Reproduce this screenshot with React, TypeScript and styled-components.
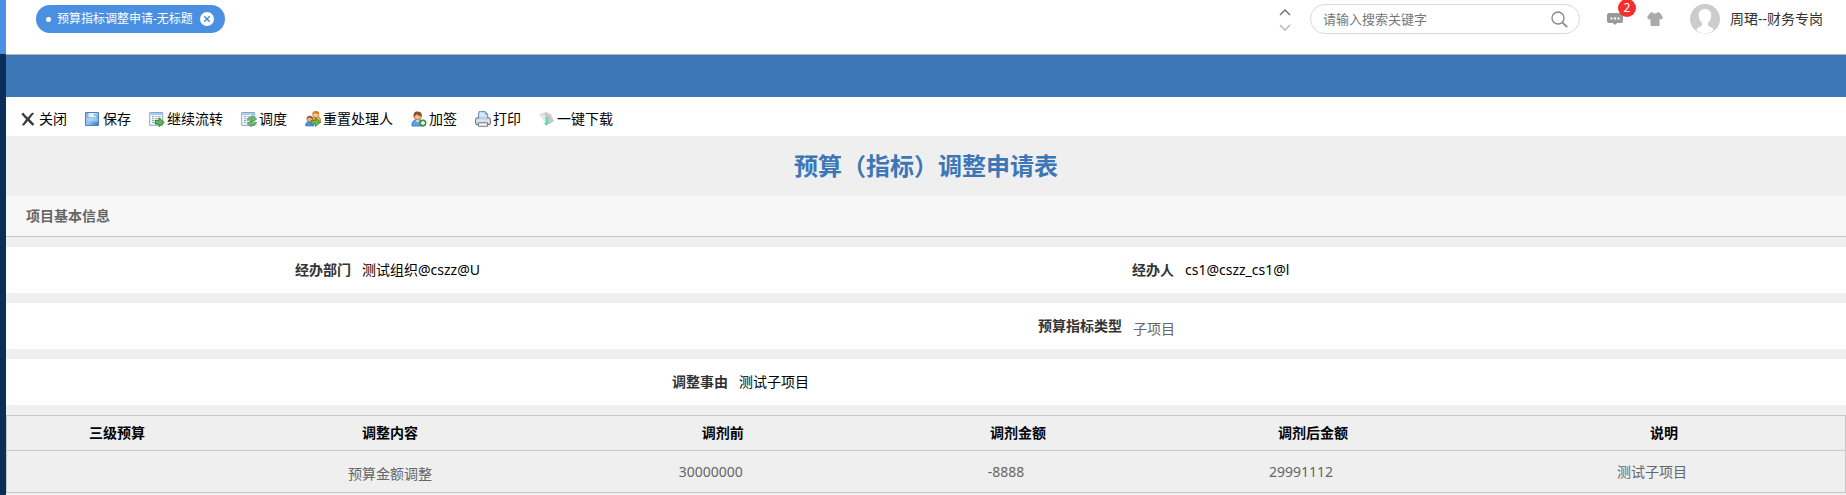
import React from "react";
import styled, { createGlobalStyle } from "styled-components";

const GlobalStyle = createGlobalStyle`
  *, *::before, *::after { box-sizing: border-box; }
  body {
    margin: 0;
    background: #efefef;
    color: #000;
    font-family: "Noto Sans", "Noto Sans CJK SC", sans-serif;
    font-size: 14px;
    line-height: 20px;
  }
  button {
    padding: 0;
    border: 0;
    background: none;
    color: inherit;
    font: inherit;
    cursor: pointer;
  }
`;

const Page = styled.div`
  display: flex;
  min-height: 100vh;
`;

const Rail = styled.aside`
  display: flex;
  flex-direction: column;
  flex: 0 0 6px;
  background: #0b2e59;
`;

const RailAccent = styled.div`
  height: 54px;
  background: #4a90e2;
`;

const Main = styled.main`
  flex: 1;
  min-width: 0;
`;

const Header = styled.header`
  display: flex;
  align-items: flex-start;
  justify-content: space-between;
  height: 55px;
  padding: 4px 23px 0 30px;
  border-bottom: 1px solid #b9b9b9;
  background: #fff;
`;

const Tab = styled.div`
  display: flex;
  align-items: center;
  height: 28px;
  margin-top: 1px;
  padding: 0 11px 0 10px;
  border-radius: 14px;
  background: #4a90e2;
  color: #fff;
`;

const TabDot = styled.span`
  width: 5px;
  height: 5px;
  margin-right: 6px;
  border-radius: 50%;
  background: #fff;
`;

const TabLink = styled.a`
  margin-right: 7px;
  color: inherit;
  font-size: 12px;
  text-decoration: none;
  white-space: nowrap;
`;

const IconButton = styled.button`
  display: flex;
  align-items: center;
  justify-content: center;
`;

const HeaderTools = styled.div`
  display: flex;
  align-items: center;
  height: 30px;
`;

const Scroller = styled.div`
  display: flex;
  flex-direction: column;
  gap: 8px;
  margin: 1px 19px 0 0;
`;

const SearchBox = styled.form`
  display: flex;
  align-items: center;
  width: 270px;
  height: 30px;
  margin-right: 27px;
  padding: 0 11px 0 12px;
  border: 1px solid #d9d9d9;
  border-radius: 15px;
`;

const SearchInput = styled.input`
  flex: 1;
  min-width: 0;
  padding: 0;
  border: 0;
  outline: 0;
  background: none;
  color: #333;
  font: inherit;
  font-size: 13px;
  &::placeholder { color: #777; opacity: 1; }
`;

const MessageButton = styled(IconButton)`
  position: relative;
  margin-right: 24px;
`;

const Badge = styled.span`
  position: absolute;
  top: -12px;
  right: -13px;
  width: 18px;
  height: 18px;
  border-radius: 50%;
  background: #f52d2d;
  color: #fff;
  font-size: 12px;
  line-height: 18px;
  text-align: center;
`;

const User = styled.a`
  display: flex;
  align-items: center;
  gap: 10px;
  margin-left: 27px;
  color: #333;
  text-decoration: none;
  white-space: nowrap;
`;

const Banner = styled.div`
  height: 42px;
  background: #3c76b6;
`;

const Toolbar = styled.nav`
  display: flex;
  gap: 18px;
  height: 39px;
  padding: 12px 15px 0;
  background: #fff;
`;

const ToolButton = styled.button`
  display: flex;
  align-items: center;
  gap: 2px;
  height: 20px;
  white-space: nowrap;
  svg { flex: none; }
`;

const Title = styled.h1`
  margin: 0;
  padding: 12px 0;
  color: #3c76b6;
  font-size: 24px;
  font-weight: 700;
  line-height: 36px;
  text-align: center;
`;

const SectionTitle = styled.h2`
  margin: 0 0 10px;
  padding: 10px 20px;
  border-bottom: 1px solid #c8c8c8;
  background: #f7f7f7;
  color: #666;
  font-size: 14px;
  font-weight: 700;
  line-height: 20px;
`;

const FieldRow = styled.dl<{ $columns: string }>`
  display: grid;
  grid-template-columns: ${(p) => p.$columns};
  margin: 0 0 10px;
  padding: 13px 0;
  background: #fff;
`;

const FieldLabel = styled.dt`
  padding-right: 11px;
  color: #333;
  font-weight: 700;
  text-align: right;
  white-space: nowrap;
`;

const FieldValue = styled.dd<{ $readOnly?: boolean }>`
  margin: 0;
  color: ${(p) => (p.$readOnly ? "#666" : "#000")};
  line-height: ${(p) => (p.$readOnly ? 26 : 20)}px;
  height: 20px;
  white-space: nowrap;
`;

const Table = styled.table`
  width: 100%;
  border: 1px solid #c8c8c8;
  border-collapse: collapse;
  table-layout: fixed;
`;

const Col = styled.col<{ $share: number }>`
  width: ${(p) => p.$share}%;
`;

const HeadCell = styled.th`
  height: 35px;
  padding: 0;
  border-bottom: 1px solid #c8c8c8;
  font-weight: 700;
`;

const Cell = styled.td<{ $entry?: boolean }>`
  height: 42px;
  padding: ${(p) => (p.$entry ? "0 24px 0 0" : "4px 0 0")};
  color: #666;
  text-align: center;
`;

const Svg = ({ children, size = 16 }: { children: React.ReactNode; size?: number }) => (
  <svg width={size} height={size} viewBox="0 0 16 16" fill="none" aria-hidden="true">
    {children}
  </svg>
);

const CloseIcon = () => (
  <Svg>
    <path d="M.4 3.2 2.2 1.500Q4.300 4.500 6.700 6.400L11 1.800 13.200 2 8.500 7.900 13.400 13.200 11.400 14.700 6.800 9.900 3 14.600.8 14.200 5.100 8.300Z" fill="#3a3a3a" />
  </Svg>
);

const SaveIcon = () => (
  <Svg>
    <defs>
      <linearGradient id="disk" x1="0" y1="0" x2="1" y2="1">
        <stop offset="0" stopColor="#78aee6" />
        <stop offset=".5" stopColor="#9cc6ef" />
        <stop offset="1" stopColor="#3372b9" />
      </linearGradient>
    </defs>
    <path d="M.5 1.500h13v13H.5z" fill="url(#disk)" stroke="#4f83bd" />
    <path d="M3.500 2h7.500v4h-7.500z" fill="#e6f1fc" />
    <path d="M9 2.500h1.500V5H9z" fill="#77a9dc" />
    <path d="M1 7h12v3.500Q7 11 1 9z" fill="#c4dff7" opacity=".45" />
  </Svg>
);

const Sheet = () => (
  <>
    <path d="M.7 1.5h13v12.8H.7z" fill="#f6f9fc" stroke="#83a8cf" />
    <path d="M1.2 2h12v2h-12z" fill="#adcbe9" />
    <path d="M3 5.5h2M3 7.5h2M3 9.5h2M3 11.5h2" stroke="#7ca6cf" />
    <path d="M6 5.5h6M6 7.5h6M6 9.5h4M6 11.5h3" stroke="#a9c6de" />
  </>
);

const ForwardIcon = () => (
  <Svg>
    <Sheet />
    <path d="M6.2 9.3h3.9V6.9l5.1 4.5-5.1 4.1v-2.4H6.2z" fill="#68b64d" stroke="#34802b" />
  </Svg>
);

const DispatchIcon = () => (
  <Svg>
    <Sheet />
    <path d="M6 9.200Q7.200 5.700 11 6.500V4.500l4.800 3.400-4.800 3.200V9.200Q8.300 8 6 9.200ZM15.600 11.400Q14.600 15 10.400 14.400v1.500L6 12.600l4.400-3v1.900q2.700 1.200 5.200-.1Z" fill="#6fbb63" stroke="#428d4b" strokeWidth=".7" />
  </Svg>
);

const ReassignIcon = () => (
  <Svg>
    <path d="M5.5 11Q6 5.5 11 5.5T15.5 10v2H6z" fill="#f3a846" stroke="#c37725" strokeWidth=".7" />
    <circle cx="10.8" cy="3.5" r="3.2" fill="#f5c38b" stroke="#b26a23" strokeWidth=".6" />
    <path d="M7.6 3Q7.3.2 10.8.2T14 3Q11 3.2 9.8 1.8 9.2 3 7.6 3Z" fill="#d17b22" />
    <path d="M.6 15Q.3 10.5 4.6 10.5T9 15z" fill="#4b96e0" stroke="#2e69b3" strokeWidth=".6" />
    <circle cx="4.8" cy="8" r="2.9" fill="#edb58b" stroke="#8c4a2b" strokeWidth=".6" />
    <path d="M1.8 7.5Q1.8 5 4.8 5T7.8 7.5Q5 7.5 4 6.5 3.5 7.5 1.8 7.5Z" fill="#9b552f" />
    <path d="M6 9.4h4.4V6.8l5.1 4.4-5.1 4.2v-2.5H6z" fill="#6fb653" stroke="#39842d" strokeWidth=".8" />
  </Svg>
);

const CosignIcon = () => (
  <Svg>
    <path d="M.9 15Q.4 8.8 6.5 8.8T12.5 15z" fill="#5ea5e7" stroke="#2e6caf" strokeWidth=".8" />
    <path d="m4.7 9 1.9 2.4L8.5 9z" fill="#f8faff" />
    <circle cx="6.7" cy="5.3" r="3.7" fill="#efbd91" stroke="#8d5737" strokeWidth=".7" />
    <path d="M2.7 5.7Q2-.1 6.9.6T10.5 5.5Q7.6 5.1 5.8 3.3 4.8 5 2.7 5.7Z" fill="#8c522f" />
    <circle cx="11.9" cy="12" r="3.3" fill="#4da34b" stroke="#2b7932" strokeWidth=".6" />
    <path d="M11.9 10v4M9.9 12h4" stroke="#fff" strokeWidth="1.3" />
  </Svg>
);

const PrintIcon = () => (
  <Svg>
    <path d="M3.3 7 4 .7h6.4L12.7 3v4z" fill="#d8eaff" stroke="#5d83b8" />
    <path d="M10.3.8v2.500h2.300" stroke="#7f9dc6" />
    <path d="M.6 8.300Q.7 6.700 2.500 6.700h11q1.800 0 1.900 1.600v4.200q0 1.200-1.300 1.200H2q-1.400 0-1.400-1.200z" fill="#c5c9d2" stroke="#686c78" />
    <path d="M3.900 5.500h8.300v2.500H3.900z" fill="#b4d2f4" />
    <path d="M1.300 9.200h13.400M1.200 11h13.600" stroke="#f0f1f4" />
    <path d="M3.500 11.800h9v3.500h-9z" fill="#f4f5f7" stroke="#747985" />
  </Svg>
);

const DownloadIcon = () => (
  <Svg>
    <path d="M.4 3.3 6.5 1 9 3.2 3.5 7.8Z" fill="#d8d9d9" />
    <path d="M6.8 1 12 3.1 15 10 10.3 13.2 4 8Z" fill="#c7c9c9" />
    <path d="m2 5.1 3.5-1.5 3 8.6L5 10Z" fill="#e7e8e8" />
    <path d="M6.5 6h2.4v5l1.6-.8-2.7 4.9L4 11.5l2.5.4z" fill="#56e0a4" />
    <path d="m9 3 3.2 1.6 1.3 4" stroke="#e1e3e3" />
  </Svg>
);

const CircleCloseIcon = () => (
  <Svg size={14}>
    <circle cx="8" cy="8" r="8" fill="#fff" />
    <path d="m4.8 4.8 6.4 6.4m0-6.4-6.4 6.4" stroke="#4a90e2" strokeWidth="1.8" />
  </Svg>
);

const Chevron = ({ down = false }: { down?: boolean }) => (
  <svg width="12" height="7" viewBox="0 0 12 7" fill="none" aria-hidden="true">
    <path d={down ? "M1 1l5 5 5-5" : "M1 6l5-5 5 5"} stroke={down ? "#bbb" : "#777"} strokeWidth="1.5" />
  </svg>
);

const SearchIcon = () => (
  <svg width="17" height="17" viewBox="0 0 17 17" fill="none" stroke="#888" strokeWidth="1.3" aria-hidden="true">
    <circle cx="7" cy="7" r="6" />
    <path d="m11.3 11.3 4.9 4.9" strokeWidth="1.7" />
  </svg>
);

const MessageIcon = () => (
  <Svg>
    <path d="M2 2h12q2 0 2 2v6q0 2-2 2h-4l-2 2-2-2H2q-2 0-2-2V4q0-2 2-2z" fill="#999" />
    <path d="M3.5 6.5h2v2h-2zM7 6.5h2v2H7zM10.5 6.5h2v2h-2z" fill="#fff" />
  </Svg>
);

const ShirtIcon = () => (
  <Svg>
    <path d="M5 1Q8 4.2 11 1l2.3 1.2L16 6.5l-2 2.3-1.5-1V15h-9V7.8L2 8.8 0 6.5 2.7 2.2Z" fill="#aaa" />
  </Svg>
);

const Avatar = () => (
  <svg width="30" height="30" viewBox="0 0 30 30" aria-hidden="true">
    <circle cx="15" cy="15" r="15" fill="#ccc" />
    <path d="M15 5c-4.4 0-6.6 3-6.2 7 .2 3.6 1.7 5.500 3.400 6.900.4 2.300-.8 3.300-3.900 4.600-1.200.5-1.700 1.600-1.800 2.900C9 28.500 11.700 29.500 15 29.500s6-1 8.500-3.100c-.1-1.300-.6-2.400-1.800-2.900-3.100-1.300-4.300-2.300-3.900-4.600 1.700-1.400 3.200-3.300 3.400-6.900.4-4-1.800-7-6.200-7z" fill="#fff" />
  </svg>
);

const tools = [
  { label: "关闭", Icon: CloseIcon },
  { label: "保存", Icon: SaveIcon },
  { label: "继续流转", Icon: ForwardIcon },
  { label: "调度", Icon: DispatchIcon },
  { label: "重置处理人", Icon: ReassignIcon },
  { label: "加签", Icon: CosignIcon },
  { label: "打印", Icon: PrintIcon },
  { label: "一键下载", Icon: DownloadIcon },
];

const columns = [
  { name: "三级预算", share: 12 },
  { name: "调整内容", share: 17.7 },
  { name: "调剂前", share: 18.5 },
  { name: "调剂金额", share: 13.6 },
  { name: "调剂后金额", share: 18.5 },
  { name: "说明", share: 19.7 },
];

const rows = [["", "预算金额调整", "30000000", "-8888", "29991112", "测试子项目"]];

export default function App() {
  return (
    <Page>
      <GlobalStyle />
      <Rail>
        <RailAccent />
      </Rail>
      <Main>
        <Header>
          <Tab>
            <TabDot />
            <TabLink href="#form">预算指标调整申请-无标题</TabLink>
            <IconButton type="button" aria-label="关闭标签">
              <CircleCloseIcon />
            </IconButton>
          </Tab>
          <HeaderTools>
            <Scroller>
              <IconButton type="button" aria-label="向上">
                <Chevron />
              </IconButton>
              <IconButton type="button" aria-label="向下">
                <Chevron down />
              </IconButton>
            </Scroller>
            <SearchBox role="search" onSubmit={(e) => e.preventDefault()}>
              <SearchInput type="text" aria-label="搜索" placeholder="请输入搜索关键字" />
              <IconButton type="submit" aria-label="搜索">
                <SearchIcon />
              </IconButton>
            </SearchBox>
            <MessageButton type="button" aria-label="消息">
              <MessageIcon />
              <Badge>2</Badge>
            </MessageButton>
            <IconButton type="button" aria-label="换肤">
              <ShirtIcon />
            </IconButton>
            <User href="#user">
              <Avatar />
              周珺--财务专岗
            </User>
          </HeaderTools>
        </Header>
        <Banner />
        <Toolbar>
          {tools.map(({ label, Icon }) => (
            <ToolButton key={label} type="button">
              <Icon />
              {label}
            </ToolButton>
          ))}
        </Toolbar>
        <Title id="form">预算（指标）调整申请表</Title>
        <SectionTitle>项目基本信息</SectionTitle>
        <FieldRow $columns="356fr 467fr 356fr 661fr">
          <FieldLabel>经办部门</FieldLabel>
          <FieldValue>测试组织@cszz@U</FieldValue>
          <FieldLabel>经办人</FieldLabel>
          <FieldValue>cs1@cszz_cs1@l</FieldValue>
        </FieldRow>
        <FieldRow $columns="1127fr 713fr">
          <FieldLabel>预算指标类型</FieldLabel>
          <FieldValue $readOnly>子项目</FieldValue>
        </FieldRow>
        <FieldRow $columns="733fr 1107fr">
          <FieldLabel>调整事由</FieldLabel>
          <FieldValue>测试子项目</FieldValue>
        </FieldRow>
        <Table>
          <colgroup>
            {columns.map((c) => (
              <Col key={c.name} $share={c.share} />
            ))}
          </colgroup>
          <thead>
            <tr>
              {columns.map((c) => (
                <HeadCell key={c.name} scope="col">
                  {c.name}
                </HeadCell>
              ))}
            </tr>
          </thead>
          <tbody>
            {rows.map((row, r) => (
              <tr key={r}>
                {row.map((value, i) => (
                  <Cell key={columns[i].name} $entry={i > 1}>
                    {value}
                  </Cell>
                ))}
              </tr>
            ))}
          </tbody>
        </Table>
      </Main>
    </Page>
  );
}
